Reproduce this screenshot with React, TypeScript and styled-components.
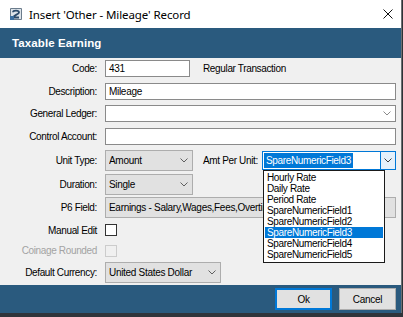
import React from "react";
import styled, { createGlobalStyle } from "styled-components";

const Global = createGlobalStyle`
  html, body { margin: 0; padding: 0; background: #2e3236; }
  body { width: 403px; height: 317px; overflow: hidden; }
  * { box-sizing: border-box; }
`;

const Window = styled.div`
  width: 402px;
  height: 313px;
  display: flex;
  flex-direction: column;
  background: #f0f0f0;
  border-right: 1px solid #6b6f73;
  font-family: "Liberation Sans", Arial, sans-serif;
  font-size: 10px;
  color: #000;
`;

const TitleBar = styled.div`
  height: 28px;
  flex: none;
  background: #fff;
  display: flex;
  align-items: center;
  padding: 0 8px 0 9px;
  gap: 6px;
`;

const TitleText = styled.div`
  flex: 1;
  font-family: "Noto Sans", "Liberation Sans", sans-serif;
  font-size: 11.5px;
  color: #000;
  letter-spacing: -0.1px;
`;

const Header = styled.div`
  height: 30px;
  flex: none;
  background: #2a5a7e;
  color: #fff;
  display: flex;
  align-items: center;
  padding-left: 12px;
  font-family: "Liberation Sans", Arial, sans-serif;
  font-weight: bold;
  font-size: 11.5px;
  letter-spacing: 0.1px;
`;

const Body = styled.div`
  position: relative;
  flex: 1;
  display: flex;
  flex-direction: column;
  padding: 2px 5px 0 0;
`;

const Row = styled.div<{ $h: number; $mt: number }>`
  display: flex;
  align-items: center;
  height: ${(p) => p.$h}px;
  margin-top: ${(p) => p.$mt}px;
`;

const Label = styled.div<{ $disabled?: boolean }>`
  width: 97px;
  flex: none;
  text-align: right;
  margin-right: 8px;
  letter-spacing: -0.35px;
  white-space: nowrap;
  color: ${(p) => (p.$disabled ? "#a3a3a3" : "#000")};
`;

const Inline = styled.div<{ $w?: number; $ml: number }>`
  letter-spacing: -0.35px;
  white-space: nowrap;
  margin-left: ${(p) => p.$ml}px;
  ${(p) => (p.$w ? `width:${p.$w}px;` : "")}
`;

const TextBox = styled.div<{ $w?: number }>`
  height: 100%;
  ${(p) => (p.$w ? `width:${p.$w}px; flex:none;` : "flex:1;")}
  background: #fff;
  border: 1px solid #8a8a8a;
  display: flex;
  align-items: center;
  padding-left: 3px;
  letter-spacing: -0.3px;
  position: relative;
`;

const Select = styled.div<{ $w?: number }>`
  height: 100%;
  ${(p) => (p.$w ? `width:${p.$w}px; flex:none;` : "flex:1;")}
  background: #e1e1e1;
  border: 1px solid #adadad;
  display: flex;
  align-items: center;
  padding-left: 3px;
  letter-spacing: -0.3px;
  overflow: hidden;
  white-space: nowrap;
  min-width: 0;
`;

const SelectText = styled.div<{ $max?: number }>`
  flex: 1;
  overflow: hidden;
  white-space: nowrap;
  ${(p) => (p.$max ? `max-width:${p.$max}px;` : "")}
`;

const ChevronWrap = styled.div`
  width: 16px;
  flex: none;
  display: flex;
  align-items: center;
  justify-content: center;
  height: 100%;
`;

const ActiveSelect = styled.div`
  width: 134px;
  flex: none;
  height: 19px;
  background: #fff;
  border: 1px solid #0078d7;
  display: flex;
  align-items: center;
  padding-left: 1px;
`;

const Highlight = styled.div`
  background: #0078d7;
  color: #fff;
  height: 15px;
  display: flex;
  align-items: center;
  padding: 0 2px 0 2px;
  letter-spacing: -0.35px;
  white-space: nowrap;
`;

const DropButton = styled.div`
  margin-left: auto;
  width: 15px;
  height: 100%;
  background: #e5f1fb;
  border-left: 1px solid #0078d7;
  display: flex;
  align-items: center;
  justify-content: center;
`;

const Check = styled.div<{ $disabled?: boolean }>`
  width: 12px;
  height: 12px;
  background: ${(p) => (p.$disabled ? "#f0f0f0" : "#fff")};
  border: 1px solid ${(p) => (p.$disabled ? "#cccccc" : "#333")};
`;

const DropList = styled.div`
  position: absolute;
  left: 263px;
  top: 112px;
  width: 122px;
  background: #fff;
  border: 1px solid #1a1a1a;
  padding: 1px 1px 2px 1px;
  display: flex;
  flex-direction: column;
`;

const DropItem = styled.div<{ $sel?: boolean }>`
  height: 11px;
  line-height: 11px;
  padding-left: 2px;
  letter-spacing: -0.35px;
  white-space: nowrap;
  background: ${(p) => (p.$sel ? "#0078d7" : "transparent")};
  color: ${(p) => (p.$sel ? "#fff" : "#000")};
`;

const Footer = styled.div`
  height: 28px;
  flex: none;
  background: #2a5a7e;
  display: flex;
  align-items: center;
  justify-content: flex-end;
  gap: 7px;
  padding-right: 5px;
`;

const Button = styled.button<{ $default?: boolean }>`
  width: 57px;
  height: 22px;
  margin: 0;
  padding: 0;
  background: #e1e1e1;
  border: ${(p) => (p.$default ? "2px solid #0078d7" : "1px solid #adadad")};
  font-family: "Liberation Sans", Arial, sans-serif;
  font-size: 10px;
  letter-spacing: -0.3px;
  color: #000;
`;

const Chevron = ({ color = "#5f5f5f" }: { color?: string }) => (
  <svg width="8" height="5" viewBox="0 0 8 5">
    <path d="M0.5 0.5 L4 4 L7.5 0.5" fill="none" stroke={color} strokeWidth="1" />
  </svg>
);

const AppIcon = () => (
  <svg width="14" height="14" viewBox="0 0 14 14">
    <rect x="1" y="1" width="12" height="12" rx="1" fill="#6b7c8c" />
    <rect x="2" y="2" width="10" height="10" fill="#dde4ea" />
    <path d="M4 5.2 C4 3.2 10 3 10 5.4 C10 7.2 5 8 4 10.5 L10 10.5" fill="none" stroke="#2b4a6a" strokeWidth="1.8" />
    <rect x="1" y="9" width="4" height="4" fill="#3b6fa0" />
  </svg>
);

const CloseIcon = () => (
  <svg width="10" height="10" viewBox="0 0 10 10">
    <path d="M0.5 0.5 L9.5 9.5 M9.5 0.5 L0.5 9.5" stroke="#111" strokeWidth="1" />
  </svg>
);

const Backdrop = styled.div`
  height: 4px;
  background: #30343a;
`;

const items = [
  "Hourly Rate",
  "Daily Rate",
  "Period Rate",
  "SpareNumericField1",
  "SpareNumericField2",
  "SpareNumericField3",
  "SpareNumericField4",
  "SpareNumericField5",
];

export default function App() {
  return (
    <>
      <Global />
      <Window>
        <TitleBar>
          <AppIcon />
          <TitleText>Insert 'Other - Mileage' Record</TitleText>
          <CloseIcon />
        </TitleBar>
        <Header>Taxable Earning</Header>
        <Body>
          <Row $h={17} $mt={0}>
            <Label>Code:</Label>
            <TextBox $w={85}>431</TextBox>
            <Inline $ml={13}>Regular Transaction</Inline>
          </Row>
          <Row $h={17} $mt={6}>
            <Label>Description:</Label>
            <TextBox>Mileage</TextBox>
          </Row>
          <Row $h={17} $mt={5}>
            <Label>General Ledger:</Label>
            <TextBox>
              <SelectText />
              <ChevronWrap>
                <Chevron color="#8a8a8a" />
              </ChevronWrap>
            </TextBox>
          </Row>
          <Row $h={17} $mt={6}>
            <Label>Control Account:</Label>
            <TextBox />
          </Row>
          <Row $h={21} $mt={5}>
            <Label>Unit Type:</Label>
            <Select $w={88}>
              <SelectText>Amount</SelectText>
              <ChevronWrap>
                <Chevron />
              </ChevronWrap>
            </Select>
            <Inline $w={60} $ml={10}>Amt Per Unit:</Inline>
            <ActiveSelect>
              <Highlight>SpareNumericField3</Highlight>
              <DropButton>
                <Chevron color="#3c3c3c" />
              </DropButton>
            </ActiveSelect>
          </Row>
          <Row $h={21} $mt={3}>
            <Label>Duration:</Label>
            <Select $w={88}>
              <SelectText>Single</SelectText>
              <ChevronWrap>
                <Chevron />
              </ChevronWrap>
            </Select>
          </Row>
          <Row $h={21} $mt={2}>
            <Label>P6 Field:</Label>
            <Select>
              <SelectText $max={154}>Earnings - Salary,Wages,Fees,Overtime,Bonuses,Commission</SelectText>
            </Select>
          </Row>
          <Row $h={16} $mt={4}>
            <Label>Manual Edit</Label>
            <Check />
          </Row>
          <Row $h={15} $mt={5}>
            <Label $disabled>Coinage Rounded</Label>
            <Check $disabled />
          </Row>
          <Row $h={21} $mt={4}>
            <Label>Default Currency:</Label>
            <Select $w={116}>
              <SelectText>United States Dollar</SelectText>
              <ChevronWrap>
                <Chevron />
              </ChevronWrap>
            </Select>
          </Row>
          <DropList>
            {items.map((it, i) => (
              <DropItem key={it} $sel={i === 5}>
                {it}
              </DropItem>
            ))}
          </DropList>
        </Body>
        <Footer>
          <Button $default>Ok</Button>
          <Button>Cancel</Button>
        </Footer>
      </Window>
      <Backdrop />
    </>
  );
}
